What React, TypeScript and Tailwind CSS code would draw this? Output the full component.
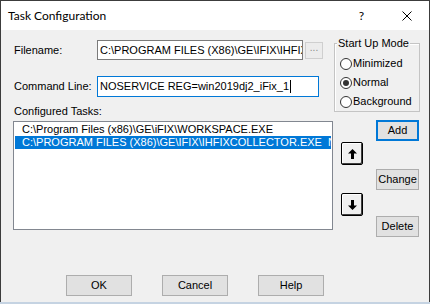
import React from "react";

// Task Configuration dialog (classic Win32 look)

const UI_FONT = "font-['Liberation_Sans',Arial,sans-serif]";
const TITLE_FONT = "font-['Lato','Noto_Sans',sans-serif]";

function PushButton({
  label,
  isDefault = false,
  className = "",
}: {
  label: string;
  isDefault?: boolean;
  className?: string;
}) {
  return (
    <button
      className={`flex items-center justify-center bg-[#e1e1e1] border text-[11px] leading-none text-black ${
        isDefault ? "border-[#0078d7] shadow-[inset_0_0_0_1px_#0078d7]" : "border-[#adadad]"
      } ${className}`}
    >
      {label}
    </button>
  );
}

function ArrowButton({ dir }: { dir: "up" | "down" }) {
  return (
    <button className="flex h-[23px] w-[22px] items-center justify-center rounded-[2px] border border-black bg-[#f0f0f0] shadow-[inset_-1px_-1px_0_#404040,inset_1px_1px_0_#ffffff]">
      <svg width="9" height="10" viewBox="0 0 9 10" className={dir === "down" ? "rotate-180" : ""}>
        <polygon points="4.5,0 9,4.5 6,4.5 6,10 3,10 3,4.5 0,4.5" fill="#000" />
      </svg>
    </button>
  );
}

function Radio({ label, checked = false }: { label: string; checked?: boolean }) {
  return (
    <div className="flex h-[19px] items-center">
      <span className="flex h-[12px] w-[12px] items-center justify-center rounded-full border border-[#333] bg-white">
        {checked && <span className="h-[6px] w-[6px] rounded-full bg-[#333]" />}
      </span>
      <span className="ml-[1px] text-[11px]">{label}</span>
    </div>
  );
}

export default function App() {
  return (
    <div className={`flex h-[306px] w-[430px] flex-col bg-white ${UI_FONT}`}>
      <div className="flex h-[302px] flex-col border-x border-t border-[#3c3c3c]">
        {/* Title bar */}
        <div className={`flex h-[29px] items-center bg-white ${TITLE_FONT}`}>
          <span className="ml-[7px] text-[12px] text-black">Task Configuration</span>
          <span className="ml-auto mr-[38px] text-[12px] text-black">?</span>
          <svg width="10" height="10" viewBox="0 0 10 10" className="mr-[17px]">
            <path d="M0.5 0.5 L9.5 9.5 M9.5 0.5 L0.5 9.5" stroke="#000" strokeWidth="1" />
          </svg>
        </div>

        {/* Body */}
        <div className="flex flex-1 flex-col bg-[#f0f0f0] text-[11px] text-black">
          <div className="flex pl-[12px]">
            {/* Left column */}
            <div className="flex w-[320px] flex-col">
              <div className="mt-[10px] flex h-[20px] items-center">
                <span className="w-[84px] pl-[1px]">Filename:</span>
                <div className="h-[20px] w-[206px] overflow-hidden whitespace-nowrap border border-[#7a7a7a] bg-white pl-[2px] leading-[18px]">
                  C:\PROGRAM FILES (X86)\GE\IFIX\IHFIX
                </div>
                <div className="ml-[2px] flex h-[17px] w-[18px] items-start justify-center border border-[#cfcfcf] bg-[#ececec] text-[10px] leading-[10px] text-[#8a8a8a]">
                  ...
                </div>
              </div>
              <div className="mt-[16px] flex h-[21px] items-center">
                <span className="w-[84px] pl-[1px]">Command Line:</span>
                <div className="flex h-[21px] w-[222px] items-center overflow-hidden whitespace-nowrap border border-[#0078d7] bg-white pl-[2px]">
                  NOSERVICE REG=win2019dj2_iFix_1
                  <span className="ml-[1px] h-[13px] w-[1px] bg-black" />
                </div>
              </div>
              <div className="mt-[8px] pl-[1px] leading-[13px]">Configured Tasks:</div>
              <div className="mt-[3px] h-[109px] w-[320px] overflow-hidden border border-[#828790] bg-white p-[1px]">
                <div className="h-[13px] whitespace-nowrap pl-[7px] leading-[13px]">
                  C:\Program Files (x86)\GE\iFIX\WORKSPACE.EXE
                </div>
                <div className="h-[13px] whitespace-nowrap bg-[#0078d7] pl-[7px] leading-[13px] text-white">
                  C:\PROGRAM FILES (X86)\GE\IFIX\IHFIXCOLLECTOR.EXE&nbsp;&nbsp;NOSERVICE
                </div>
              </div>
            </div>

            {/* Right column */}
            <div className="ml-[1px] flex w-[86px] flex-col">
              {/* Start Up Mode group box */}
              <div className="mt-[13px] h-[69px] border border-[#c4c4c4] pl-[5px] shadow-[inset_1px_1px_0_#ffffff]">
                <div className="-ml-[3px] -mt-[7px] w-fit bg-[#f0f0f0] px-[1px] leading-[13px]">
                  Start Up Mode
                </div>
                <div className="mt-[4px]">
                  <Radio label="Minimized" />
                  <Radio label="Normal" checked />
                  <Radio label="Background" />
                </div>
              </div>
              <div className="flex">
                <div className="ml-[7px] flex w-[22px] flex-col">
                  <div className="mt-[30px]">
                    <ArrowButton dir="up" />
                  </div>
                  <div className="mt-[28px]">
                    <ArrowButton dir="down" />
                  </div>
                </div>
                <div className="ml-[13px] flex flex-col">
                  <PushButton label="Add" isDefault className="mt-[8px] h-[21px] w-[43px]" />
                  <PushButton label="Change" className="mt-[28px] h-[21px] w-[43px]" />
                  <PushButton label="Delete" className="mt-[26px] h-[21px] w-[43px]" />
                </div>
              </div>
            </div>
          </div>

          {/* Bottom buttons */}
          <div className="mt-auto mb-[6px] flex pl-[65px]">
            <PushButton label="OK" className="h-[21px] w-[66px]" />
            <PushButton label="Cancel" className="ml-[30px] h-[21px] w-[66px]" />
            <PushButton label="Help" className="ml-[30px] h-[21px] w-[66px]" />
          </div>
        </div>
      </div>
      <div className="h-[2px] bg-[#c5d3e2]" />
    </div>
  );
}
